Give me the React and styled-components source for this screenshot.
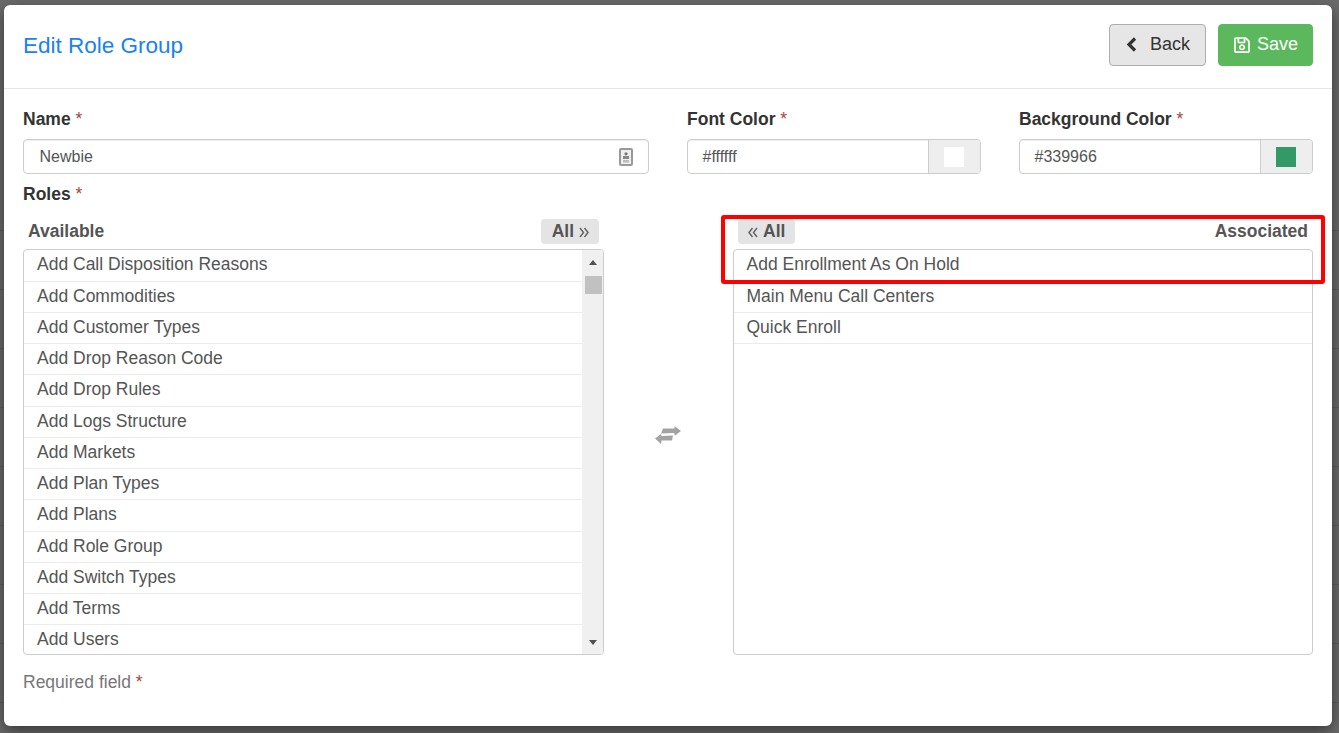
import React from 'react';
import styled, { createGlobalStyle } from 'styled-components';
import { FaRegSave } from 'react-icons/fa';

const Global = createGlobalStyle`
  html, body { margin: 0; padding: 0; height: 100%; overflow: hidden; }
  body { font-family: "Liberation Sans", Arial, sans-serif; color: #333; }
  * { box-sizing: border-box; }
`;

const Backdrop = styled.div`
  width: 1339px; height: 733px; padding: 5px 7px 7px 4px; position: relative;
  background:
    repeating-linear-gradient(to bottom, transparent 0, transparent 58px, #5f5f5f 58px, #5f5f5f 59px) 0 172px no-repeat,
    #6b6b6b;
  background-size: 100% 561px, auto;
`;
const Modal = styled.div`
  width: 1328px; height: 721px; background: #fff; border-radius: 6px;
  box-shadow: 0 5px 15px rgba(0,0,0,.5); display: flex; flex-direction: column;
`;
const Header = styled.header`
  height: 84px; flex: none; border-bottom: 1px solid #e5e5e5; display: flex; align-items: center;
  justify-content: space-between; padding: 0 19px;
`;
const Title = styled.h4`
  margin: 0; font-size: 22.5px; font-weight: 400; color: #1a82f0; line-height: 1;
`;
const Actions = styled.div`
  display: flex; gap: 12px; margin-bottom: 4px;
`;
const Button = styled.button`
  height: 42px; border-radius: 4px; font: 18px "Liberation Sans", Arial, sans-serif; display: flex; align-items: center;
  justify-content: center; padding: 0 0 0 ${p => p.$pl || 0}px;
  width: ${p => p.$w}px; gap: ${p => p.$gap}px;
  background: ${p => p.$primary ? '#5cb85c' : '#e6e6e6'};
  border: 1px solid ${p => p.$primary ? '#5cb85c' : '#adadad'};
  color: ${p => p.$primary ? '#fff' : '#333'};
`;
const Content = styled.div`
  padding: 19px 19px 0; flex: 1; display: flex; flex-direction: column;
`;
const Fields = styled.div`
  display: grid; grid-template-columns: 626px 294px 294px; column-gap: 38px;
`;
const Label = styled.label`
  display: block; font-size: 17.5px; font-weight: 700; color: #333; line-height: 20px; height: 20px;
`;
const FieldLabel = styled(Label)`
  line-height: 22px;
`;
const Star = styled.span`
  font-weight: 400; color: #a94442;
`;
const InputBox = styled.div`
  margin-top: 11px; height: 35px; border: 1px solid #ccc; border-radius: 4px; display: flex; align-items: center;
  overflow: hidden; box-shadow: inset 0 1px 1px rgba(0,0,0,.075); font-size: 16px; color: #555;
`;
const InputText = styled.span`
  flex: 1; padding-left: ${p => p.$pad}px;
`;
const NameIcon = styled.svg`
  width: 14px; height: 18px; margin-right: 15px; flex: none;
`;
const Addon = styled.div`
  width: 52px; height: 100%; background: #eee; border-left: 1px solid #ccc; display: flex; align-items: center; justify-content: center;
  padding-right: 2px;
`;
const Swatch = styled.span`
  width: 20px; height: 20px; background: ${p => p.$c};
`;
const RolesLabel = styled(Label)`
  margin-top: 10px;
`;
const Duel = styled.div`
  display: grid; grid-template-columns: 581px 129px 580px; margin-top: 15px;
`;
const ListHead = styled.div`
  height: 25px; display: flex; align-items: center; justify-content: space-between; padding: 0 5px;
  font-size: 17.5px; font-weight: 700; color: #555; margin-bottom: 5px;
`;
const AllChip = styled.span`
  height: 25px; background: #e4e4e4; border-radius: 4px; display: inline-flex; align-items: center; gap: 5px;
  padding: 0 10px 0 ${p => p.$pl}px; font-size: 17.5px; font-weight: 700; color: #555;
`;
const ChevronsIcon = styled.svg`
  width: 10px; height: 11px; flex: none; margin-top: 1px;
`;
const ListBox = styled.div`
  height: 406px; border: 1px solid #ccc; border-radius: 4px; display: flex; overflow: hidden;
`;
const Rows = styled.ul`
  list-style: none; margin: 0; padding: 0.25px 0 0; flex: 1; min-width: 0;
`;
const Row = styled.li`
  height: 31.25px; line-height: 28px; padding-left: ${p => p.$pad}px; font-size: 17.5px; color: #555;
  border-bottom: 1px solid ${p => p.$last ? 'transparent' : '#ececec'};
`;
const Scrollbar = styled.div`
  width: 21px; flex: none; background: #f0f0f0; border-left: 1px solid #f0f0f0; display: flex; flex-direction: column; align-items: center;
  padding-top: 10px;
`;
const ArrowUp = styled.span`
  width: 0; height: 0; border-left: 4px solid transparent; border-right: 4px solid transparent; border-bottom: 5px solid #505050;
`;
const ArrowDown = styled.span`
  width: 0; height: 0; border-left: 4px solid transparent; border-right: 4px solid transparent; border-top: 5px solid #505050;
  margin-top: auto; margin-bottom: 9px;
`;
const Thumb = styled.span`
  width: 17px; height: 18px; background: #c1c1c1; margin-top: 11px;
`;
const SwapCell = styled.div`
  display: flex; align-items: center; justify-content: center; padding: 0 2px 4px 0;
`;
const SwapIcon = styled.svg`
  width: 28px; height: 20px;
`;
const Required = styled.div`
  margin-top: 17px; font-size: 17.5px; line-height: 20px; color: #777;
`;
const Annotation = styled.div`
  position: absolute; left: 721px; top: 215px; width: 604px; height: 68.5px; border: 4px solid #f00; border-radius: 3px; pointer-events: none;
`;

const available = ['Add Call Disposition Reasons','Add Commodities','Add Customer Types','Add Drop Reason Code','Add Drop Rules','Add Logs Structure','Add Markets','Add Plan Types','Add Plans','Add Role Group','Add Switch Types','Add Terms','Add Users'];
const associated = ['Add Enrollment As On Hold','Main Menu Call Centers','Quick Enroll'];

const Chevrons = ({ dir }) => (
  <ChevronsIcon viewBox="0 0 10 11">
    <path
      d={dir === 'left' ? 'M4.500 1 L1 5.500 L4.500 10 M9 1 L5.500 5.500 L9 10' : 'M1 1 L4.500 5.500 L1 10 M5.500 1 L9 5.500 L5.500 10'}
      fill="none" stroke="#666" strokeWidth="1.500"
    />
  </ChevronsIcon>
);

export default function App() {
  return (
    <Backdrop>
      <Global />
      <Modal>
        <Header>
          <Title>Edit Role Group</Title>
          <Actions>
            <Button $w={97} $gap={13} $pl={1}>
              <svg width="11" height="15" viewBox="0 0 11 15">
                <path d="M9 1.500 L3 7.500 L9 13.500" fill="none" stroke="#333" strokeWidth="3.200" />
              </svg>
              Back
            </Button>
            <Button $w={95} $gap={6} $primary><FaRegSave size={18} />Save</Button>
          </Actions>
        </Header>
        <Content>
          <Fields>
            <div>
              <FieldLabel>Name <Star>*</Star></FieldLabel>
              <InputBox>
                <InputText $pad={15.5}>Newbie</InputText>
                <NameIcon viewBox="0 0 14 18">
                  <rect x="1" y="1" width="12" height="16" rx="1" fill="#efefef" stroke="#999" strokeWidth="2" />
                  <circle cx="7" cy="5.800" r="1.600" fill="#777" />
                  <rect x="4" y="8" width="6" height="3" fill="#888" />
                  <rect x="4" y="12" width="6" height="2.500" fill="#bbb" />
                </NameIcon>
              </InputBox>
            </div>
            <div>
              <FieldLabel>Font Color <Star>*</Star></FieldLabel>
              <InputBox>
                <InputText $pad={14.5}>#ffffff</InputText>
                <Addon><Swatch $c="#fff" /></Addon>
              </InputBox>
            </div>
            <div>
              <FieldLabel>Background Color <Star>*</Star></FieldLabel>
              <InputBox>
                <InputText $pad={14.5}>#339966</InputText>
                <Addon><Swatch $c="#339966" /></Addon>
              </InputBox>
            </div>
          </Fields>
          <RolesLabel>Roles <Star>*</Star></RolesLabel>
          <Duel>
            <div>
              <ListHead>
                <span>Available</span>
                <AllChip $pl={11}>All<Chevrons dir="right" /></AllChip>
              </ListHead>
              <ListBox>
                <Rows>
                  {available.map((t, i) => <Row key={t} $pad={13} $last={i === available.length - 1}>{t}</Row>)}
                </Rows>
                <Scrollbar><ArrowUp /><Thumb /><ArrowDown /></Scrollbar>
              </ListBox>
            </div>
            <SwapCell>
              <SwapIcon viewBox="0 0 28 20">
                <path d="M20.500 1 L27 6 L21 10.500 L20 8 L7 8.500 L9 3.500 L20.500 3.500 Z" fill="#a3a3a3" />
                <path d="M1 13.500 L7 9 L7.500 11 L19 10.500 L18 15.500 L7.500 15.500 L7 19 Z" fill="#a3a3a3" />
              </SwapIcon>
            </SwapCell>
            <div>
              <ListHead>
                <AllChip $pl={10}><Chevrons dir="left" />All</AllChip>
                <span>Associated</span>
              </ListHead>
              <ListBox>
                <Rows>
                  {associated.map(t => <Row key={t} $pad={12.5}>{t}</Row>)}
                </Rows>
              </ListBox>
            </div>
          </Duel>
          <Required>Required field <Star>*</Star></Required>
        </Content>
      </Modal>
      <Annotation />
    </Backdrop>
  );
}
